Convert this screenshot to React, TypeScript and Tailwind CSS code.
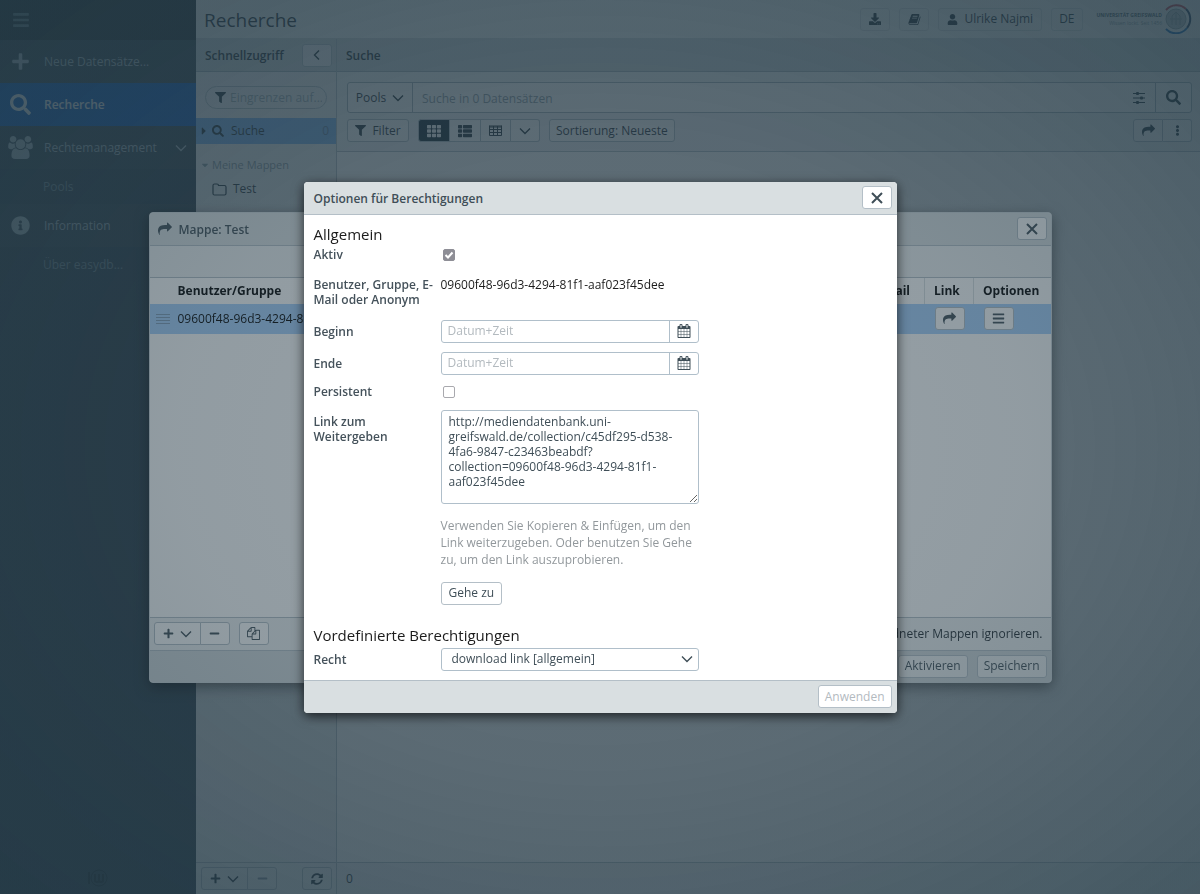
import { useState } from "react";
import type { ReactNode } from "react";
import {
  FaBars,
  FaCaretDown,
  FaCaretRight,
  FaDownload,
  FaEllipsisV,
  FaFilter,
  FaInfoCircle,
  FaMinus,
  FaPlus,
  FaSearch,
  FaSyncAlt,
  FaTh,
  FaThList,
  FaUser,
} from "react-icons/fa";

const SHARE_PATH =
  "M1792 640q0 26-19 45l-512 512q-19 19-45 19t-45-19-19-45v-256h-224q-98 0-175.5 6t-154 21.5-133 42.5-105.5 69.5-80 101-48.5 138.5-17.5 181q0 55 5 123 0 6 2.5 23.5t2.5 26.5q0 15-8.5 25t-23.5 10q-16 0-28-17-7-9-13-22t-13.5-30-10.5-24q-127-285-127-451 0-199 53-333 162-403 875-403h224v-256q0-26 19-45t45-19 45 19l512 512q19 19 19 45z";
const CALENDAR_PATH =
  "M192 1664h288v-288h-288v288zm352 0h320v-288h-320v288zm-352-352h288v-320h-288v320zm352 0h320v-320h-320v320zm-352-384h288v-288h-288v288zm736 736h320v-288h-320v288zm-384-736h320v-288h-320v288zm768 736h288v-288h-288v288zm-384-352h320v-320h-320v320zm-352-864v-288q0-13-9.5-22.5t-22.5-9.5h-64q-13 0-22.5 9.5t-9.5 22.5v288q0 13 9.5 22.5t22.5 9.5h64q13 0 22.5-9.5t9.5-22.5zm736 864h288v-320h-288v320zm-384-384h320v-288h-320v288zm384 0h288v-288h-288v288zm32-480v-288q0-13-9.5-22.5t-22.5-9.5h-64q-13 0-22.5 9.5t-9.5 22.5v288q0 13 9.5 22.5t22.5 9.5h64q13 0 22.5-9.5t9.5-22.5zm384-64v1280q0 52-38 90t-90 38h-1408q-52 0-90-38t-38-90v-1280q0-52 38-90t90-38h128v-96q0-66 47-113t113-47h64q66 0 113 47t47 113v96h384v-96q0-66 47-113t113-47h64q66 0 113 47t47 113v96h128q52 0 90 38t38 90z";
const FILES_PATH =
  "M1696 384q40 0 68 28t28 68v1216q0 40-28 68t-68 28h-960q-40 0-68-28t-28-68v-288h-544q-40 0-68-28t-28-68v-672q0-40 20-88t48-76l408-408q28-28 76-48t88-20h416q40 0 68 28t28 68v328q68-40 128-40h416zm-544 213l-299 299h299v-299zm-640-384l-299 299h299v-299zm196 647l316-316v-416h-384v416q0 40-28 68t-68 28h-416v640h512v-256q0-40 20-88t48-76zm956 804v-1152h-384v416q0 40-28 68t-68 28h-416v640h896z";
const GROUP_PATH =
  "M593 896q-162 5-265 128h-134q-82 0-138-40.5t-56-118.5q0-353 124-353 6 0 43.5 21t97.5 42.5 119 21.5q67 0 133-23-5 37-5 66 0 139 81 256zm1071 637q0 120-73 189.5t-194 69.5h-874q-121 0-194-69.5t-73-189.5q0-53 3.5-103.5t14-109 26.5-108.5 43-97.5 62-81 85.5-53.5 111.5-20q10 0 43 21.5t73 48 107 48 135 21.5 135-21.5 107-48 73-48 43-21.5q61 0 111.5 20t85.5 53.5 62 81 43 97.5 26.5 108.5 14 109 3.5 103.5zm-1024-1277q0 106-75 181t-181 75-181-75-75-181 75-181 181-75 181 75 75 181zm704 384q0 159-112.5 271.5t-271.5 112.5-271.5-112.5-112.5-271.5 112.5-271.5 271.5-112.5 271.5 112.5 112.5 271.5zm576 225q0 78-56 118.5t-138 40.5h-134q-103-123-265-128 81-117 81-256 0-29-5-66 66 23 133 23 59 0 119-21.5t97.5-42.5 43.5-21q124 0 124 353zm-128-609q0 106-75 181t-181 75-181-75-75-181 75-181 181-75 181 75 75 181z";
const BOOK_PATH =
  "M1703 478q40 57 18 129l-275 906q-19 64-76.5 107.5t-122.5 43.5h-923q-77 0-148.5-53.5t-99.5-131.5q-24-67-2-127 0-4 3-27t4-37q1-8-3-21.5t-3-19.5q2-11 8-21t16.5-23.5 16.5-23.5q23-38 45-91.5t30-91.5q3-10 .5-30t-.5-28q3-11 17-28t17-23q21-36 42-92t25-90q1-9-2.5-32t.5-28q4-13 22-30.5t22-22.5q19-26 42.5-84.5t27.5-96.5q1-8-3-25.5t-2-26.5q2-8 9-18t18-23 17-21q8-12 16.5-30.5t15-35 16-36 19.5-32 26.5-23.5 36-11.5 47.5 5.5l-1 3q38-9 51-9h761q74 0 114 56t18 130l-274 906q-36 119-71.5 153.5t-128.5 34.5h-869q-27 0-38 15-11 16-1 43 24 70 144 70h923q29 0 56-15.5t35-41.5l300-987q7-22 5-57 38 15 59 43zm-1064 2q-4 13 2 22.5t20 9.5h608q13 0 25.5-9.5t16.5-22.5l21-64q4-13-2-22.5t-20-9.5h-608q-13 0-25.5 9.5t-16.5 22.5zm-83 256q-4 13 2 22.5t20 9.5h608q13 0 25.5-9.5t16.5-22.5l21-64q4-13-2-22.5t-20-9.5h-608q-13 0-25.5 9.5t-16.5 22.5z";

const SHARE_LINK =
  "http://mediendatenbank.uni-greifswald.de/collection/c45df295-d538-4fa6-9847-c23463beabdf?collection=09600f48-96d3-4294-81f1-aaf023f45dee";
const USER_ID = "09600f48-96d3-4294-81f1-aaf023f45dee";

function Glyph({ path, className, wide }: { path: string; className: string; wide?: boolean }) {
  return (
    <svg viewBox={wide ? "0 0 1920 1792" : "0 0 1792 1792"} fill="currentColor" className={className}>
      <path d={path} />
    </svg>
  );
}

function Chevron({ left }: { left?: boolean }) {
  return (
    <svg viewBox="0 0 12 12" className="size-3 shrink-0" fill="none" stroke="currentColor" strokeWidth={1.4}>
      <path d={left ? "M8 1.5L3.5 6L8 10.5" : "M1 3.5L6 8.5L11 3.5"} />
    </svg>
  );
}

function Cross() {
  return (
    <svg viewBox="0 0 12 12" className="size-3" fill="none" stroke="currentColor" strokeWidth={2}>
      <path d="M1 1L11 11M11 1L1 11" />
    </svg>
  );
}

function TableGlyph() {
  return (
    <svg viewBox="0 0 13 11" className="h-[11px] w-[13px]" fill="none" stroke="currentColor">
      <path d="M0.5 1H12.5M0.5 2H12.5M0.5 0.5V10.5H12.5V0.5M0.5 4.5H12.5M0.5 7.5H12.5M4.5 1V10.5M8.5 1V10.5" />
    </svg>
  );
}

function SlidersGlyph() {
  return (
    <svg viewBox="0 0 12 12" className="size-3" fill="currentColor">
      <path d="M0 1h12v1H0zM0 5.5h12v1H0zM0 10h12v1H0z" />
      <rect x="3" y="0" width="3" height="3" rx="1" />
      <rect x="7" y="4.5" width="3" height="3" rx="1" />
      <rect x="3" y="9" width="3" height="3" rx="1" />
    </svg>
  );
}

function Button({
  children,
  className = "",
  label,
  disabled,
}: {
  children: ReactNode;
  className?: string;
  label?: string;
  disabled?: boolean;
}) {
  return (
    <button
      type="button"
      aria-label={label}
      disabled={disabled}
      className={
        "flex h-[23px] shrink-0 items-center justify-center rounded-[3px] border border-[#b4bfc7] " + className
      }
    >
      {children}
    </button>
  );
}

function NavItem({
  icon,
  label,
  active,
  chevron,
}: {
  icon: ReactNode;
  label: string;
  active?: boolean;
  chevron?: boolean;
}) {
  return (
    <a
      href="#"
      className={
        "flex h-[43px] items-center " +
        (active ? "bg-[#0a55b5] font-semibold text-[#e2e8ec]" : "bg-[#2f3f49] text-[#a0b0b8]")
      }
    >
      <span className="flex w-[41px] justify-center">{icon}</span>
      <span className="flex-1 pl-[3px]">{label}</span>
      {chevron && (
        <span className="pr-[9px]">
          <Chevron />
        </span>
      )}
    </a>
  );
}

function Sidebar() {
  return (
    <nav className="flex w-[196px] shrink-0 flex-col bg-[#293a46]">
      <button type="button" aria-label="Menü" className="flex h-10 items-center bg-[#1d282d] pl-3 text-[#5f747d]">
        <FaBars className="size-[18px]" />
      </button>
      <NavItem icon={<FaPlus className="size-[19px]" />} label="Neue Datensätze..." />
      <NavItem icon={<FaSearch className="size-[21px]" />} label="Recherche" active />
      <NavItem
        icon={<Glyph path={GROUP_PATH} className="h-[23px] w-[25px]" wide />}
        label="Rechtemanagement"
        chevron
      />
      <a href="#" className="flex h-[35px] items-center pl-[43px] text-[#6d838e]">
        Pools
      </a>
      <NavItem icon={<FaInfoCircle className="size-[19px]" />} label="Information" />
      <a href="#" className="flex h-[35px] items-center pl-[43px] text-[#6d838e]">
        Über easydb...
      </a>
      <div className="mt-auto flex h-9 items-center justify-center pt-1 text-[#17252c]">
        <svg viewBox="0 0 20 20" className="size-5" fill="none" stroke="currentColor" strokeWidth={2}>
          <path d="M1 4V16M7 6V13Q9 15 11 13V6M11 13Q13 15 15 13V6" />
          <circle cx="11" cy="10" r="8" strokeWidth={1} />
        </svg>
      </div>
    </nav>
  );
}

function UniversityLogo() {
  return (
    <div className="flex items-center gap-0.5 text-[#4f5f68]">
      <div className="text-right text-[5px] leading-[8px]">
        <div className="font-bold">UNIVERSITÄT GREIFSWALD</div>
        <div className="text-[#8a969c]">Wissen lockt. Seit 1456</div>
      </div>
      <svg viewBox="0 0 28 30" className="h-[30px] w-7" fill="none">
        <circle cx="12" cy="15" r="10" fill="#b9c2c6" stroke="#93a0a6" />
        <path d="M8 21V12L12 8L16 12V21M6 15H18M12 8V21" stroke="#93a0a6" />
        <path d="M2 6A14 14 0 0 1 22 5" stroke="#c83c4c" strokeWidth={2} />
        <path d="M22 5A14 14 0 0 1 23 24" stroke="#20385a" strokeWidth={2} />
        <path d="M23 24A14 14 0 0 1 2 25" stroke="#1467b8" strokeWidth={2} />
      </svg>
    </div>
  );
}

function QuickAccess() {
  return (
    <section className="flex w-[141px] shrink-0 flex-col border-r border-[#b4bfc7] bg-[#eef1f2]">
      <div className="flex h-[33px] items-center justify-between border-b border-[#a5b3bb] bg-[#ccd5d8] pr-1 pl-[9px]">
        <h2 className="pt-0.5 font-semibold">Schnellzugriff</h2>
        <Button label="Zurück" className="w-[30px] bg-[#eef1f2]">
          <Chevron left />
        </Button>
      </div>
      <div className="px-[9px] pt-3.5">
        <div className="flex h-[23px] items-center rounded-full border border-[#b4bfc7] pr-1 pl-[9px]">
          <FaFilter className="size-[11px] shrink-0" />
          <input
            aria-label="Eingrenzen"
            placeholder="Eingrenzen auf..."
            className="w-full min-w-0 pl-1 outline-none placeholder:text-[#9eacb4]"
          />
        </div>
      </div>
      <a href="#" className="mt-[9px] flex h-[26px] items-center bg-[#7ab2ee] pr-[7px] pl-[3px]">
        <FaCaretRight className="h-3 w-2.5" />
        <FaSearch className="ml-[3px] size-3" />
        <span className="flex-1 pl-[7px]">Suche</span>
        <span className="text-[#5f7f9f]">0</span>
      </a>
      <div className="mt-[11px] flex h-5 items-center gap-0.5 pl-1 text-[11px] text-[#88979f]">
        <FaCaretDown className="size-[10px]" />
        Meine Mappen
      </div>
      <a href="#" className="mt-1 flex h-5 items-center gap-1.5 pl-4">
        <svg viewBox="0 0 15 13" className="h-[13px] w-[15px]" fill="none" stroke="currentColor" strokeWidth={1.2}>
          <path d="M1 2.5Q1 1 2.5 1H5Q6.5 1 6.5 2.5H12.5Q14 2.5 14 4V10.5Q14 12 12.5 12H2.5Q1 12 1 10.5Z" />
        </svg>
        Test
      </a>
      <div className="mt-auto flex h-8 items-center border-t border-[#b4bfc7] pr-1 pl-[5px]">
        <Button label="Neu" className="w-[47px] gap-1.5 rounded-r-none">
          <FaPlus className="size-[11px]" />
          <Chevron />
        </Button>
        <Button label="Entfernen" className="-ml-px w-[30px] rounded-l-none" disabled>
          <FaMinus className="size-[11px] text-[#8594a0]" />
        </Button>
        <Button label="Aktualisieren" className="ml-auto w-[30px]">
          <FaSyncAlt className="size-3" />
        </Button>
      </div>
    </section>
  );
}

function SearchPanel() {
  return (
    <section className="flex min-w-0 flex-1 flex-col">
      <div className="flex h-[33px] items-center border-b border-[#a5b3bb] bg-[#ccd5d8] pl-[9px]">
        <h2 className="pt-0.5 font-semibold">Suche</h2>
      </div>
      <div className="border-b border-[#b4bfc7] bg-[#f0f3f4] px-2 pt-2.5 pb-[9px] pl-2.5">
        <div className="flex h-[31px] items-stretch rounded-[3px] border border-[#a5b3bb] bg-white">
          <button type="button" className="flex w-[65px] items-center justify-center gap-1.5 border-r border-[#a5b3bb]">
            Pools
            <Chevron />
          </button>
          <input
            aria-label="Suche"
            placeholder="Suche in 0 Datensätzen"
            className="min-w-0 flex-1 px-[9px] pt-0.5 outline-none placeholder:text-[#8c9aa3]"
          />
          <button type="button" aria-label="Erweiterte Suche" className="flex w-8 items-center justify-center">
            <SlidersGlyph />
          </button>
          <button
            type="button"
            aria-label="Suchen"
            className="flex w-9 items-center justify-center border-l border-[#a5b3bb]"
          >
            <FaSearch className="size-[15px]" />
          </button>
        </div>
        <div className="mt-1.5 flex">
          <Button className="w-[62px] gap-1.5 bg-white">
            <FaFilter className="size-[11px]" />
            Filter
          </Button>
          <Button label="Kacheln" className="ml-[9px] w-8 rounded-r-none bg-[#10222e] text-white">
            <FaTh className="size-3.5" />
          </Button>
          <Button label="Liste" className="w-[31px] rounded-none border-l-0 bg-white">
            <FaThList className="size-3.5" />
          </Button>
          <Button label="Tabelle" className="w-[30px] rounded-none border-l-0 bg-white">
            <TableGlyph />
          </Button>
          <Button label="Mehr Ansichten" className="w-[29px] rounded-l-none border-l-0 bg-white">
            <Chevron />
          </Button>
          <Button className="ml-[9px] bg-white px-1.5">Sortierung: Neueste</Button>
          <Button label="Teilen" className="ml-auto w-[30px] rounded-r-none bg-white">
            <Glyph path={SHARE_PATH} className="size-[13px]" />
          </Button>
          <Button label="Mehr" className="w-[29px] rounded-l-none border-l-0 bg-white">
            <FaEllipsisV className="size-[11px]" />
          </Button>
        </div>
      </div>
      <div className="flex flex-1 items-center justify-center pl-[132px]">
        <p className="text-[#6f7d85] italic">Es wurden keine Datensätze gefunden, die Ihrer Suche entsprechen.</p>
      </div>
      <div className="flex h-8 items-center border-t border-[#b4bfc7] bg-[#eef1f2] pl-[9px]">0</div>
    </section>
  );
}

function FolderDialog() {
  return (
    <section
      role="dialog"
      aria-label="Mappe: Test"
      className="flex h-[471px] w-[903px] flex-col overflow-hidden rounded-[4px] border border-[#cdd5d9] bg-white shadow-[0_4px_14px_rgba(0,0,0,0.5)]"
    >
      <header className="flex h-[33px] shrink-0 items-center border-b border-[#b4bfc7] bg-[#d9dfe1] pr-1 pl-2">
        <Glyph path={SHARE_PATH} className="size-3.5" />
        <h2 className="flex-1 pt-0.5 pl-[7px] font-semibold">Mappe: Test</h2>
        <Button label="Schließen" className="w-[30px] bg-white">
          <Cross />
        </Button>
      </header>
      <div className="h-8 shrink-0 border-b border-[#b4bfc7] bg-[#eef1f2]" />
      <table className="w-full table-fixed text-left text-black">
        <thead>
          <tr className="h-[26px]">
            <th className="w-7" aria-label="Verschieben" />
            <th className="font-bold">Benutzer/Gruppe</th>
            <th className="w-[280px] font-bold">Berechtigung</th>
            <th className="w-[60px] pr-3.5 text-right font-bold">E-Mail</th>
            <th className="w-[49px] border-l border-[#d9dfe1] pl-[9px] font-bold">Link</th>
            <th className="w-[77px] border-l border-[#d9dfe1] pl-[9px] font-bold">Optionen</th>
          </tr>
        </thead>
        <tbody>
          <tr className="h-[30px] bg-[#a5cffa]">
            <td className="pl-1.5">
              <svg viewBox="0 0 14 10" className="h-[10px] w-3.5" stroke="#7f9cb8" fill="none">
                <path d="M0 0.5H14M0 3.5H14M0 6.5H14M0 9.5H14" />
              </svg>
            </td>
            <td>{USER_ID}</td>
            <td />
            <td />
            <td className="pl-2.5 text-[#3f4e57]">
              <Button label="Link" className="w-[30px] bg-white">
                <Glyph path={SHARE_PATH} className="size-[13px]" />
              </Button>
            </td>
            <td className="pl-2.5 text-[#3f4e57]">
              <Button label="Optionen" className="w-[30px] bg-white">
                <FaBars className="size-[13px]" />
              </Button>
            </td>
          </tr>
        </tbody>
      </table>
      <div className="mt-auto flex h-[33px] shrink-0 items-center border-t border-[#b4bfc7] bg-[#eef1f2] pr-2 pl-1">
        <Button label="Hinzufügen" className="w-[47px] gap-1.5 rounded-r-none bg-white">
          <FaPlus className="size-[11px]" />
          <Chevron />
        </Button>
        <Button label="Entfernen" className="-ml-px w-[30px] rounded-l-none bg-white">
          <FaMinus className="size-[11px]" />
        </Button>
        <Button label="Kopieren" className="ml-[9px] w-[30px] bg-white">
          <Glyph path={FILES_PATH} className="size-[13px]" />
        </Button>
        <span className="ml-auto text-[#222b31]">Rechte übergeordneter Mappen ignorieren.</span>
      </div>
      <footer className="flex h-8 shrink-0 items-center justify-end gap-[9px] border-t border-[#b4bfc7] bg-[#d0d7da] px-1">
        <Button className="bg-[#eef1f2] px-1.5">Aktivieren</Button>
        <Button className="bg-[#eef1f2] px-1.5">Speichern</Button>
      </footer>
    </section>
  );
}

function Field({
  label,
  htmlFor,
  className = "",
  children,
}: {
  label: string;
  htmlFor?: string;
  className?: string;
  children: ReactNode;
}) {
  return (
    <div className={"grid grid-cols-[127px_258px] " + className}>
      <label htmlFor={htmlFor} className="pr-1 leading-[15px] font-semibold text-[#45525b]">
        {label}
      </label>
      {children}
    </div>
  );
}

function DateInput({ id }: { id: string }) {
  return (
    <div className="flex h-[23px] rounded-[3px] border border-[#b0bfca]">
      <input id={id} placeholder="Datum+Zeit" className="min-w-0 flex-1 px-1.5 outline-none placeholder:text-[#b3babf]" />
      <button
        type="button"
        aria-label="Kalender öffnen"
        className="flex w-[29px] items-center justify-center border-l border-[#b0bfca]"
      >
        <Glyph path={CALENDAR_PATH} className="size-3.5" />
      </button>
    </div>
  );
}

function PermissionDialog() {
  const [active, setActive] = useState(true);
  const [link, setLink] = useState(SHARE_LINK);

  return (
    <section
      role="dialog"
      aria-label="Optionen für Berechtigungen"
      className="w-[593px] overflow-hidden rounded-[4px] bg-white shadow-[0_3px_12px_rgba(0,0,0,0.7)]"
    >
      <header className="flex h-[33px] items-center justify-between border-b border-[#b4bfc7] bg-[#d9dfe1] pr-[5px] pl-2.5">
        <h2 className="pt-0.5 font-semibold">Optionen für Berechtigungen</h2>
        <Button label="Schließen" className="w-[30px] bg-white">
          <Cross />
        </Button>
      </header>

      <form className="px-2.5 pt-2 pb-[9px]">
        <h3 className="text-[15px] leading-[22px] font-medium text-[#1c1c1c]">Allgemein</h3>
        <Field label="Aktiv" htmlFor="active" className="mb-3 h-5 items-center">
          <span className="flex pl-0.5">
            <input
              id="active"
              type="checkbox"
              checked={active}
              onChange={(e) => setActive(e.target.checked)}
              className="peer size-3 appearance-none rounded-[2px] border border-[#8e8e96] bg-white checked:bg-[#8e8e96]"
            />
            <svg
              viewBox="0 0 12 12"
              className="pointer-events-none invisible -ml-3 size-3 peer-checked:visible"
              fill="none"
              stroke="#fff"
              strokeWidth={2}
            >
              <path d="M2.5 6L5 8.5L9.5 3.5" />
            </svg>
          </span>
        </Field>
        <Field label="Benutzer, Gruppe, E-Mail oder Anonym" className="mb-[13px]">
          <span className="leading-[15px] text-[#1c1c1c]">{USER_ID}</span>
        </Field>
        <Field label="Beginn" htmlFor="begin" className="mb-[9px] items-center">
          <DateInput id="begin" />
        </Field>
        <Field label="Ende" htmlFor="end" className="mb-[9px] items-center">
          <DateInput id="end" />
        </Field>
        <Field label="Persistent" htmlFor="persistent" className="mb-2.5 h-4 items-center">
          <span className="flex pl-0.5">
            <input
              id="persistent"
              type="checkbox"
              className="size-3 appearance-none rounded-[2px] border border-[#a9a9ae] bg-white checked:bg-[#8e8e96]"
            />
          </span>
        </Field>
        <Field label="Link zum Weitergeben" htmlFor="link" className="[&>label]:pt-1">
          <div>
            <textarea
              id="link"
              value={link}
              onChange={(e) => setLink(e.target.value)}
              className="block h-[94px] w-full resize rounded-[3px] border border-[#b0bfca] px-[7px] py-[3px] leading-[15px] outline-none"
            />
            <p className="mt-[13px] leading-[17px] text-[#92989c]">
              Verwenden Sie Kopieren &amp; Einfügen, um den Link weiterzugeben. Oder benutzen Sie Gehe zu, um den Link
              auszuprobieren.
            </p>
            <Button className="mt-3.5 bg-white px-[7px]">Gehe zu</Button>
          </div>
        </Field>

        <h3 className="mt-[19px] mb-0.5 text-[15px] leading-[22px] font-medium text-[#1c1c1c]">
          Vordefinierte Berechtigungen
        </h3>
        <Field label="Recht" htmlFor="right" className="items-center">
          <div className="grid items-center">
            <select
              id="right"
              className="col-start-1 row-start-1 h-[23px] appearance-none rounded-[3px] border border-[#b0bfca] bg-white pl-2.5"
            >
              <option>download link [allgemein]</option>
            </select>
            <span className="pointer-events-none col-start-1 row-start-1 mr-1.5 justify-self-end">
              <Chevron />
            </span>
          </div>
        </Field>
      </form>

      <footer className="flex h-[33px] items-center justify-end border-t border-[#b4bfc7] bg-[#d9dfe1] pr-[5px]">
        <Button className="bg-white px-1.5 text-[#b3babf]" disabled>
          Anwenden
        </Button>
      </footer>
    </section>
  );
}

function Overlay({ children }: { children: ReactNode }) {
  return (
    <div className="fixed inset-0 flex items-center justify-center bg-[radial-gradient(ellipse_at_center,rgba(42,60,72,0.48)_0%,rgba(40,60,72,0.51)_50%,rgba(38,60,72,0.6)_100%)] text-[#3f4e57]">
      {children}
    </div>
  );
}

export default function App() {
  return (
    <div className="flex min-h-screen bg-white font-['Open_Sans','Noto_Sans',sans-serif] text-[12px] text-[#1f2d36]">
      <Sidebar />
      <div className="flex min-w-0 flex-1 flex-col">
        <header className="flex h-[39px] items-center border-b border-[#ccd5d8] bg-[#f0f3f4] pr-2 pl-2">
          <h1 className="flex-1 pt-0.5 text-[19px] font-medium">Recherche</h1>
          <Button label="Herunterladen" className="w-[30px] border-[#d5dcdf]">
            <FaDownload className="size-3" />
          </Button>
          <Button label="Handbuch" className="ml-[9px] w-[30px] border-[#d5dcdf]">
            <Glyph path={BOOK_PATH} className="size-[13px]" />
          </Button>
          <Button className="ml-[9px] gap-1.5 border-[#d5dcdf] px-2">
            <FaUser className="size-[11px]" />
            Ulrike Najmi
          </Button>
          <Button className="mr-3.5 ml-[9px] border-[#d5dcdf] px-[7px]">DE</Button>
          <UniversityLogo />
        </header>
        <div className="flex flex-1">
          <QuickAccess />
          <SearchPanel />
        </div>
      </div>
      <Overlay>
        <FolderDialog />
      </Overlay>
      <Overlay>
        <PermissionDialog />
      </Overlay>
    </div>
  );
}
